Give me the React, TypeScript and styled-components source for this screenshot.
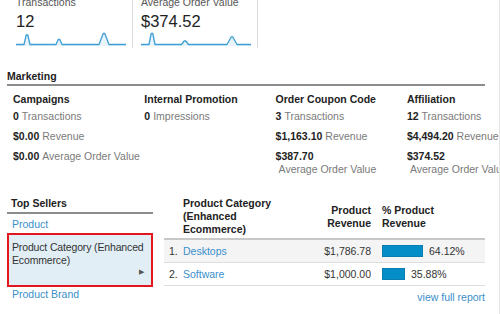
import React from "react";
import styled, { createGlobalStyle } from "styled-components";

const Global = createGlobalStyle`
  html, body { margin: 0; padding: 0; background: #fff; }
  body { font-family: "Liberation Sans", Arial, sans-serif; color: #333; }
  * { box-sizing: border-box; }
`;

const Page = styled.div`
  width: 500px;
  height: 314px;
  overflow: hidden;
  border-right: 1px solid #e6e6e6;
  font-size: 10.5px;
  line-height: 13px;
`;

const TopRow = styled.div`
  display: flex;
  margin-top: -4px;
  padding-left: 8px;
  height: 52px;
`;

const Card = styled.div`
  width: 125px;
  padding: 0 6px 0 8px;
  border-right: 1px solid #dcdcdc;
  display: flex;
  flex-direction: column;
`;

const CardLabel = styled.div`
  color: #555;
  font-size: 10.5px;
  line-height: 13px;
  white-space: nowrap;
`;

const CardValue = styled.div`
  color: #222;
  font-size: 16.5px;
  line-height: 18px;
  margin-top: 3px;
`;

const Spark = styled.svg`
  display: block;
  margin-top: 2px;
`;

const Section = styled.div`
  padding: 0 14px 0 7px;
`;

const SectionTitle = styled.div`
  font-weight: bold;
  color: #222;
  line-height: 13px;
  padding-bottom: 1px;
  border-bottom: 2px solid #8c8c8c;
`;

const MarketingTitle = styled(SectionTitle)`
  margin-top: 22px;
`;

const Columns = styled.div`
  display: grid;
  grid-template-columns: repeat(4, 131.3px);
  padding-left: 13px;
  margin-top: 7px;
  width: 560px;
`;

const Col = styled.div`
  padding-right: 2px;
`;

const ColHead = styled.div`
  font-weight: bold;
  color: #222;
  margin-bottom: 4px;
  white-space: nowrap;
`;

const Stat = styled.div`
  margin-bottom: 7px;
`;

const StatValue = styled.b`
  color: #222;
`;

const StatLabel = styled.span`
  display: inline-block;
  margin-left: 3px;
  color: #7a7a7a;
  white-space: nowrap;
`;

const Bottom = styled.div`
  display: flex;
  margin-top: 14px;
  padding-left: 7px;
`;

const Sellers = styled.div`
  width: 146px;
`;

const SellersTitle = styled(SectionTitle)`
  padding-left: 4px;
  padding-bottom: 2px;
`;

const SellerLink = styled.div`
  color: #3a8fca;
  padding-left: 5px;
  margin-top: 4px;
  white-space: nowrap;
`;

const SellerSelected = styled.div`
  margin-top: 2px;
  height: 54px;
  border: 2px solid #e3161b;
  background: #e1eef6;
  color: #333;
  padding: 6px 0 0 3px;
  display: flex;
  flex-direction: column;
  letter-spacing: -0.15px;
`;

const Arrow = styled.div`
  display: flex;
  justify-content: flex-end;
  padding-right: 7px;
  font-size: 7px;
  line-height: 8px;
  color: #555;
  margin-top: 1px;
`;

const SellerBrand = styled(SellerLink)`
  margin-top: 1px;
`;

const TableWrap = styled.div`
  margin-left: 11px;
  width: 321px;
`;

const Grid = styled.div`
  display: grid;
  grid-template-columns: 19px 108px 80px 114px;
`;

const HeadCell = styled.div<{ $align?: string; $pad?: string }>`
  font-weight: bold;
  color: #222;
  display: flex;
  align-items: center;
  justify-content: ${(p) => (p.$align === "right" ? "flex-end" : "flex-start")};
  text-align: ${(p) => p.$align || "left"};
  padding: ${(p) => p.$pad || "0"};
  padding-bottom: 2px;
  border-bottom: 2px solid #c8c8c8;
`;

const Row = styled.div<{ $shade?: boolean }>`
  display: contents;
  & > div {
    background: ${(p) => (p.$shade ? "#f4f4f4" : "#fff")};
    height: 23px;
    border-bottom: 1px solid #dedede;
    display: flex;
    align-items: center;
  }
`;

const Cell = styled.div<{ $align?: string; $pad?: string }>`
  justify-content: ${(p) => (p.$align === "right" ? "flex-end" : "flex-start")};
  padding: ${(p) => p.$pad || "0"};
  color: #333;
  white-space: nowrap;
`;

const LinkText = styled.span`
  color: #3a8fca;
`;

const Bar = styled.span`
  display: inline-block;
  height: 12px;
  background: #058dc7;
  border: 1px solid #0a7db3;
  margin-right: 6px;
`;

const Footer = styled.div`
  text-align: right;
  color: #3a8fca;
  margin-top: 5px;
`;

type Peak = [number, number, number];

function sparkPath(peaks: Peak[], w: number, base: number) {
  let d = `M0,${base}`;
  peaks.forEach(([x, y, hw]) => {
    d += ` L${x - hw},${base} L${x - 0.8},${y} L${x + 0.8},${y} L${x + hw},${base}`;
  });
  d += ` L${w},${base}`;
  return d;
}

const Sparkline: React.FC<{ peaks: Peak[] }> = ({ peaks }) => {
  const w = 110;
  const base = 12.5;
  const line = sparkPath(peaks, w, base);
  return (
    <Spark width={w} height={14} viewBox={`0 0 ${w} 14`}>
      <path d={`${line} L${w},14 L0,14 Z`} fill="#e8f3fa" />
      <path d={line} fill="none" stroke="#3e9fd6" strokeWidth={1.3} strokeLinejoin="round" />
    </Spark>
  );
};

const marketing = [
  {
    head: "Campaigns",
    stats: [
      ["0", "Transactions"],
      ["$0.00", "Revenue"],
      ["$0.00", "Average Order Value"],
    ],
  },
  { head: "Internal Promotion", stats: [["0", "Impressions"]] },
  {
    head: "Order Coupon Code",
    stats: [
      ["3", "Transactions"],
      ["$1,163.10", "Revenue"],
      ["$387.70", "Average Order Value"],
    ],
  },
  {
    head: "Affiliation",
    stats: [
      ["12", "Transactions"],
      ["$4,494.20", "Revenue"],
      ["$374.52", "Average Order Value"],
    ],
  },
];

const rows = [
  { n: "1.", name: "Desktops", rev: "$1,786.78", pct: 64.12 },
  { n: "2.", name: "Software", rev: "$1,000.00", pct: 35.88 },
];

export default function App() {
  return (
    <Page>
      <Global />
      <TopRow>
        <Card>
          <CardLabel>Transactions</CardLabel>
          <CardValue>12</CardValue>
          <Sparkline peaks={[[11, 3, 3], [43, 7.5, 3], [88, 1.5, 5]]} />
        </Card>
        <Card>
          <CardLabel>Average Order Value</CardLabel>
          <CardValue>$374.52</CardValue>
          <Sparkline peaks={[[11, 1.5, 3], [44, 9, 3.5], [91, 5, 5]]} />
        </Card>
      </TopRow>

      <Section>
        <MarketingTitle>Marketing</MarketingTitle>
      </Section>
      <Columns>
        {marketing.map((c) => (
          <Col key={c.head}>
            <ColHead>{c.head}</ColHead>
            {c.stats.map(([v, l]) => (
              <Stat key={l}>
                <StatValue>{v}</StatValue>
                <StatLabel>{l}</StatLabel>
              </Stat>
            ))}
          </Col>
        ))}
      </Columns>

      <Bottom>
        <Sellers>
          <SellersTitle>Top Sellers</SellersTitle>
          <SellerLink>Product</SellerLink>
          <SellerSelected>
            <div>Product Category (Enhanced Ecommerce)</div>
            <Arrow>▶</Arrow>
          </SellerSelected>
          <SellerBrand>Product Brand</SellerBrand>
        </Sellers>

        <TableWrap>
          <Grid>
            <HeadCell />
            <HeadCell>Product Category (Enhanced Ecommerce)</HeadCell>
            <HeadCell $align="right">Product Revenue</HeadCell>
            <HeadCell $pad="0 40px 0 11px">% Product Revenue</HeadCell>
            {rows.map((r, i) => (
              <Row key={r.n} $shade={i === 0}>
                <Cell $pad="0 0 0 5px">{r.n}</Cell>
                <Cell>
                  <LinkText>{r.name}</LinkText>
                </Cell>
                <Cell $align="right">{r.rev}</Cell>
                <Cell $pad="0 0 0 11px">
                  <Bar style={{ width: `${(r.pct / 100) * 64}px` }} />
                  {r.pct.toFixed(2)}%
                </Cell>
              </Row>
            ))}
          </Grid>
          <Footer>view full report</Footer>
        </TableWrap>
      </Bottom>
    </Page>
  );
}
